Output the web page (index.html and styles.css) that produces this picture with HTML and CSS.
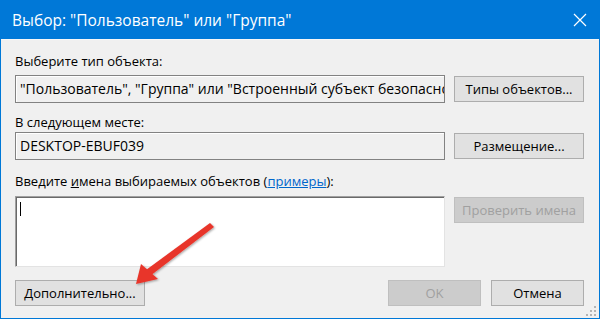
FILE: index.html
```html
<!DOCTYPE html>
<html lang="ru">
<head>
    <meta charset="UTF-8">
    <title>Выбор: "Пользователь" или "Группа"</title>
    <link rel="stylesheet" href="styles.css">
</head>
<body>
    <div class="window">
        <div class="titlebar">
            <span class="title">Выбор: "Пользователь" или "Группа"</span>
            <svg class="close" width="14" height="14" viewBox="0 0 14 14">
                <path d="M1 1 L13 13 M13 1 L1 13" stroke="#fff" stroke-width="1.2" fill="none"/>
            </svg>
        </div>

        <div class="content">
            <div class="label lbl-first">Выберите тип объекта:</div>
            <div class="row">
                <div class="field">"Пользователь", "Группа" или "Встроенный субъект безопасности"</div>
                <button type="button" class="btn">Типы объектов...</button>
            </div>

            <div class="label lbl-second">В следующем месте:</div>
            <div class="row">
                <div class="field">DESKTOP-EBUF039</div>
                <button type="button" class="btn">Размещение...</button>
            </div>

            <div class="label lbl-third">Введите <u>и</u>мена выбираемых объектов (<a href="#" class="link">примеры</a>):</div>
            <div class="row row-top">
                <div class="names"><span class="caret"></span></div>
                <button type="button" class="btn btn-disabled">Проверить имена</button>
            </div>

            <div class="footer">
                <button type="button" class="btn">Дополнительно...</button>
                <div class="footer-right">
                    <button type="button" class="btn btn-ok btn-disabled">OK</button>
                    <button type="button" class="btn btn-cancel">Отмена</button>
                </div>
            </div>
        </div>

        <!-- resize grip -->
        <svg class="grip" width="12" height="12" viewBox="0 0 12 12">
            <rect x="9" y="1" width="2" height="2" fill="#b4b4b4"/>
            <rect x="5" y="5" width="2" height="2" fill="#b4b4b4"/>
            <rect x="9" y="5" width="2" height="2" fill="#b4b4b4"/>
            <rect x="1" y="9" width="2" height="2" fill="#b4b4b4"/>
            <rect x="5" y="9" width="2" height="2" fill="#b4b4b4"/>
            <rect x="9" y="9" width="2" height="2" fill="#b4b4b4"/>
        </svg>

        <!-- red pointer arrow -->
        <svg class="arrow" width="600" height="319" viewBox="0 0 600 319">
            <defs>
                <filter id="shade" x="-20%" y="-20%" width="140%" height="140%">
                    <feDropShadow dx="1" dy="1" stdDeviation="1.2" flood-color="#000" flood-opacity="0.35"/>
                </filter>
            </defs>
            <g filter="url(#shade)" fill="#e8352b">
                <path d="M210 223 L214 227 L150 276 L146 270 Z"/>
                <path d="M136 284 L141 264 L158 279 Z"/>
            </g>
        </svg>
    </div>
</body>
</html>
```

FILE: styles.css
```css
body {
    margin: 0;
    padding: 0;
    font-family: "Segoe UI", "Open Sans", "Noto Sans", sans-serif;
    font-size: 13px;
    color: #000;
}

.window {
    position: relative;
    width: 600px;
    height: 319px;
    box-sizing: border-box;
    border: 1px solid #0078d7;
    border-top: none;
    background-color: #f0f0f0;
    overflow: hidden;
}

.titlebar {
    height: 39px;
    margin: 0 -1px;
    background-color: #0078d7;
    display: flex;
    align-items: center;
    justify-content: space-between;
    padding: 0 13px 0 12px;
    border-bottom: 1px solid #f7f7f7;
}

.title {
    color: #fff;
    font-size: 15.5px;
}

.close {
    display: block;
}

.content {
    padding: 13px 15px 0 14px;
}

.label {
    height: 16px;
    line-height: 16px;
    margin-bottom: 6px;
}

.lbl-second {
    margin-top: 11px;
    margin-bottom: 2px;
}

.lbl-third {
    margin-top: 13px;
    margin-bottom: 7px;
}

.label u {
    text-decoration-thickness: 1px;
}

.link {
    color: #0066cc;
}

.row {
    display: grid;
    grid-template-columns: 430px 130px;
    column-gap: 9px;
    align-items: center;
}

.row-top {
    align-items: start;
}

.field {
    height: 28px;
    box-sizing: border-box;
    border: 1px solid #828282;
    box-shadow: inset 1px 1px 0 #fff;
    padding: 0 4px;
    font-size: 14px;
    line-height: 26px;
    white-space: nowrap;
    overflow: hidden;
}

.names {
    height: 71px;
    box-sizing: border-box;
    background-color: #fff;
    border: 1px solid #e3e3e3;
    border-top-color: #a0a0a0;
    border-left-color: #a0a0a0;
    box-shadow: inset 1px 1px 0 #696969;
    padding: 5px 4px;
}

.caret {
    display: block;
    width: 1px;
    height: 14px;
    background-color: #000;
}

.btn {
    height: 26px;
    box-sizing: border-box;
    border: 1px solid #adadad;
    background-color: #e1e1e1;
    font-family: inherit;
    font-size: 13px;
    color: #000;
    padding: 0;
    margin: 0;
    text-align: center;
}

.row-top .btn {
    margin-top: 1px;
}

.btn-disabled {
    background-color: #cccccc;
    border-color: #bfbfbf;
    color: #a0a0a0;
}

.footer {
    display: flex;
    justify-content: space-between;
    margin-top: 13px;
}

.footer .btn {
    width: 130px;
}

.footer-right {
    display: flex;
    gap: 10px;
}

.footer-right .btn {
    width: 93px;
}

.grip {
    position: absolute;
    right: 2px;
    bottom: 1px;
}

.arrow {
    position: absolute;
    left: -1px;
    top: 0;
    pointer-events: none;
}
```
